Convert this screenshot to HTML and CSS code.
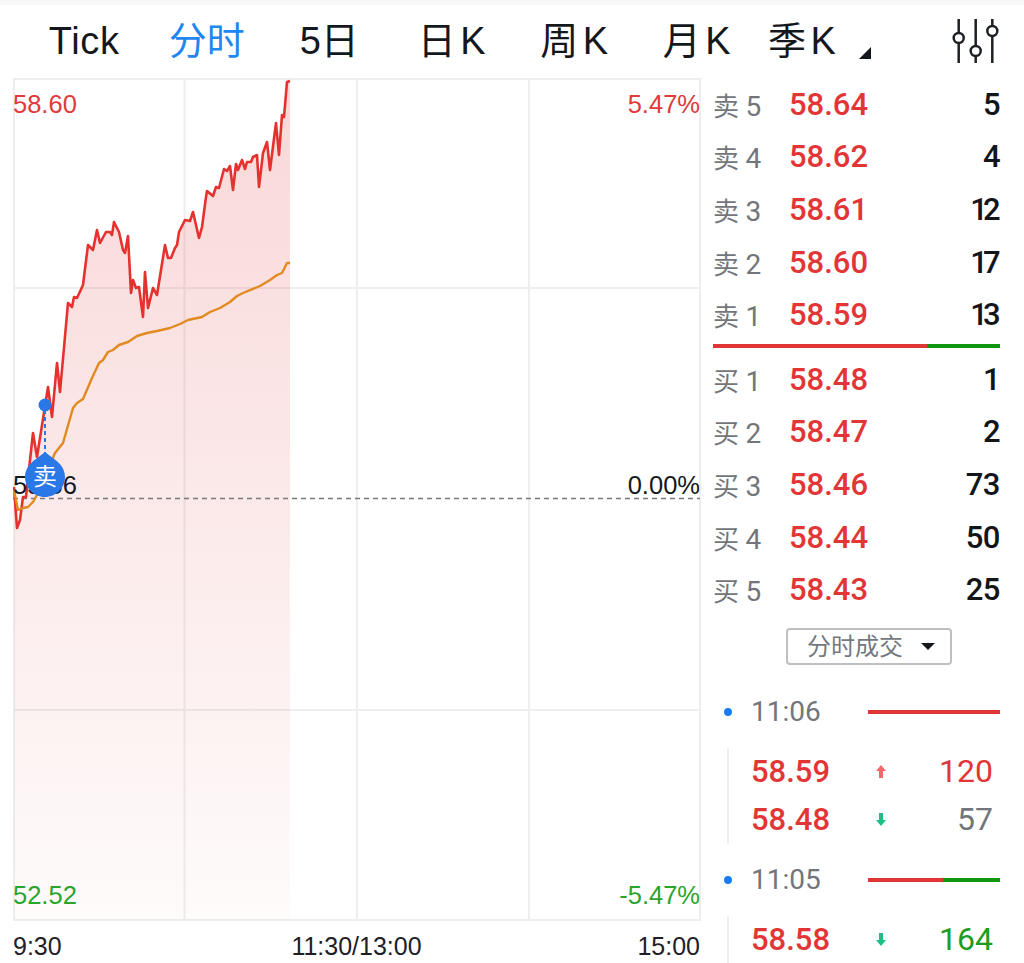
FILE: index.html
```html
<!DOCTYPE html>
<html lang="zh">
<head>
<meta charset="utf-8">
<title>分时</title>
<link rel="stylesheet" href="styles.css">
</head>
<body>
<div class="page">
  <div class="statusband"></div>

  <div class="tabs">
    <span class="tab tick">Tick</span>
    <span class="tab active">分时</span>
    <span class="tab">5日</span>
    <span class="tab">日 K</span>
    <span class="tab">周 K</span>
    <span class="tab">月 K</span>
    <span class="tab last">季 K<i class="corner"></i></span>
    <svg class="sliders" width="48" height="46" viewBox="952 18 48 46">
      <path d="M958.7 19V33M958.7 43V63M975.7 19V46M975.7 56V63M992.3 19V26M992.3 36V63"/>
      <circle cx="958.7" cy="38" r="5"/>
      <circle cx="975.7" cy="51" r="5"/>
      <circle cx="992.3" cy="31" r="5"/>
    </svg>
  </div>

  <div class="main">
    <div class="left">
      <div class="chart">
        <svg class="plot" width="688" height="843" viewBox="13 78 688 843">
          <defs>
            <linearGradient id="areafill" gradientUnits="userSpaceOnUse" x1="0" y1="81" x2="0" y2="920">
              <stop offset="0" stop-color="#e0393a" stop-opacity=".2"/>
              <stop offset="1" stop-color="#e0393a" stop-opacity=".02"/>
            </linearGradient>
          </defs>
          <g class="grid">
            <path d="M14 79H700V920H14Z"/>
            <path d="M14 288H700M14 710H700M184.500 79V920M357 79V920M529 79V920"/>
          </g>
          <path class="area" d="M14 487L17 528 20 520 23 497 26 497 33 433 37 457 48 387 52 417 57 363 60 392 68 303 72 307 74 297 77 298 83 285 88 245 93 250 97 230 100 243 106 232 110 232 112 235 114 222 119 232 123 250 125 253 128 236 131 293 133 280 136 288 139 287 143 317 145 272 148 308 153 288 157 295 165 245 168 258 171 258 175 248 177 245 179 232 185 220 190 221 193 212 199 238 202 227 206 197 207 191 213 196 216 187 219 188 224 169 227 171 230 166 233 190 236 164 238 170 242 160 245 169 247 162 251 162 253 157 257 155 259 187 263 153 267 142 270 170 276 123 279 155 282 115 284 117 287 82 290 81V920H14Z"/>
          <path class="dashed" d="M13 498.500H700"/>
          <polyline class="price" points="14,487 17,528 20,520 23,497 26,497 33,433 37,457 48,387 52,417 57,363 60,392 68,303 72,307 74,297 77,298 83,285 88,245 93,250 97,230 100,243 106,232 110,232 112,235 114,222 119,232 123,250 125,253 128,236 131,293 133,280 136,288 139,287 143,317 145,272 148,308 153,288 157,295 165,245 168,258 171,258 175,248 177,245 179,232 185,220 190,221 193,212 199,238 202,227 206,197 207,191 213,196 216,187 219,188 224,169 227,171 230,166 233,190 236,164 238,170 242,160 245,169 247,162 251,162 253,157 257,155 259,187 263,153 267,142 270,170 276,123 279,155 282,115 284,117 287,82 290,81"/>
          <polyline class="avg" points="14,490 18,510 23,508 28,507 33,502 38,493 55,453 63,443 73,408 77,403 83,399 92,378 99,363 103,360 108,352 113,350 119,345 128,342 137,336 147,333 157,331 170,328 180,324 188,320 202,317 210,312 220,308 230,302 237,296 243,293 260,286 270,280 277,275 282,273 285,267 287,263 290,263"/>
        </svg>

        <span class="lbl up tl">58.60</span>
        <span class="lbl up tr">5.47%</span>
        <span class="lbl ml">55.56</span>
        <span class="lbl mr">0.00%</span>
        <span class="lbl down bl">52.52</span>
        <span class="lbl down br">-5.47%</span>

        <div class="marker">
          <svg width="44" height="100" viewBox="23 398 44 100">
            <circle class="mdot" cx="45" cy="405" r="6.500"/>
            <path class="mline" d="M45 410V455"/>
            <path class="mdrop" d="M45 452L54 459C60 463 65 469 65 477 65 488 56 497 45 497 34 497 25 488 25 477 25 469 30 463 36 459Z"/>
          </svg>
          <span class="mtext">卖</span>
        </div>
      </div>
      <div class="axis">
        <span>9:30</span>
        <span>11:30/13:00</span>
        <span class="end">15:00</span>
      </div>
    </div>

    <div class="right">
      <div class="book">
        <div class="row"><span class="side">卖 <b>5</b></span><span class="px">58.64</span><span class="qty">5</span></div>
        <div class="row"><span class="side">卖 <b>4</b></span><span class="px">58.62</span><span class="qty">4</span></div>
        <div class="row"><span class="side">卖 <b>3</b></span><span class="px">58.61</span><span class="qty"><i class="n1">1</i>2</span></div>
        <div class="row"><span class="side">卖 <b>2</b></span><span class="px">58.60</span><span class="qty"><i class="n1">1</i>7</span></div>
        <div class="row"><span class="side">卖 <b>1</b></span><span class="px">58.59</span><span class="qty"><i class="n1">1</i>3</span></div>
      </div>
      <div class="ratio"><i class="r" style="width:74.600%"></i><i class="g"></i></div>
      <div class="book">
        <div class="row"><span class="side">买 <b>1</b></span><span class="px">58.48</span><span class="qty">1</span></div>
        <div class="row"><span class="side">买 <b>2</b></span><span class="px">58.47</span><span class="qty">2</span></div>
        <div class="row"><span class="side">买 <b>3</b></span><span class="px">58.46</span><span class="qty">73</span></div>
        <div class="row"><span class="side">买 <b>4</b></span><span class="px">58.44</span><span class="qty">50</span></div>
        <div class="row"><span class="side">买 <b>5</b></span><span class="px">58.43</span><span class="qty">25</span></div>
      </div>

      <div class="selectc">
        <div class="select">分时成交<i class="caret"></i></div>
      </div>

      <div class="minute">
        <i class="dot"></i><span class="time">11:06</span>
        <div class="ratio small"><i class="r" style="width:100%"></i></div>
      </div>
      <div class="trades">
        <div class="trade">
          <span class="px">58.59</span>
          <svg class="arrow up" width="10" height="13" viewBox="0 0 10 13"><path d="M5 0L10 6H7V13H3V6H0Z"/></svg>
          <span class="vol up">120</span>
        </div>
        <div class="trade">
          <span class="px">58.48</span>
          <svg class="arrow down" width="10" height="13" viewBox="0 0 10 13"><path d="M5 13L10 7H7V0H3V7H0Z"/></svg>
          <span class="vol">57</span>
        </div>
      </div>

      <div class="minute">
        <i class="dot"></i><span class="time">11:05</span>
        <div class="ratio small"><i class="r" style="width:57%"></i><i class="g"></i></div>
      </div>
      <div class="trades">
        <div class="trade">
          <span class="px">58.58</span>
          <svg class="arrow down" width="10" height="13" viewBox="0 0 10 13"><path d="M5 13L10 7H7V0H3V7H0Z"/></svg>
          <span class="vol down">164</span>
        </div>
      </div>
    </div>
  </div>
</div>
</body>
</html>
```

FILE: styles.css
```css
body {
  margin: 0;
  background: #fff;
  font-family: "Liberation Sans", "Noto Sans CJK SC", sans-serif;
  color: #14181d;
}
.page {
  width: 1024px;
  height: 963px;
  overflow: hidden;
}
.statusband {
  height: 5px;
  background: #f8f8f8;
}

/* tabs */
.tabs {
  height: 73px;
  display: flex;
  align-items: center;
  padding-left: 23px;
  position: relative;
}
.tab {
  width: 122.500px;
  text-align: center;
  font-size: 38px;
  line-height: 73px;
  word-spacing: -6px;
  white-space: nowrap;
}
.tab.tick {
  letter-spacing: .7px;
}
.tab.active {
  color: #1f87ef;
}
.tab.last {
  width: 110px;
  text-align: left;
  padding-left: 10px;
  box-sizing: border-box;
  flex: none;
}
.corner {
  display: inline-block;
  width: 0;
  height: 0;
  margin-left: 23px;
  border-left: 12px solid transparent;
  border-bottom: 12px solid #14181d;
  vertical-align: -5px;
}
.sliders {
  position: absolute;
  left: 952px;
  top: 13px;
}
.sliders path,
.sliders circle {
  fill: #fff;
  stroke: #1d2126;
  stroke-width: 2.500;
}

/* chart */
.main {
  display: flex;
}
.left {
  width: 688px;
  margin-left: 13px;
  flex: none;
}
.chart {
  position: relative;
  height: 843px;
}
.plot {
  display: block;
}
.grid path {
  fill: none;
  stroke: #eeeeee;
  stroke-width: 2;
}
.area {
  fill: url(#areafill);
}
.dashed {
  fill: none;
  stroke: #77777c;
  stroke-width: 1.500;
  stroke-dasharray: 5 4;
}
.price {
  fill: none;
  stroke: #e5322f;
  stroke-width: 2.600;
  stroke-linejoin: round;
}
.avg {
  fill: none;
  stroke: #e08a20;
  stroke-width: 2.400;
  stroke-linejoin: round;
}
.lbl {
  position: absolute;
  font-size: 25.500px;
  line-height: 28px;
}
.lbl.up {
  color: #e03a3a;
}
.lbl.down {
  color: #2aa52c;
}
.tl { left: 0; top: 12px; }
.tr { right: 1px; top: 12px; }
.ml { left: 0; top: 393px; }
.mr { right: 1px; top: 393px; }
.bl { left: 0; top: 803px; }
.br { right: 1px; top: 803px; }

.marker {
  position: absolute;
  left: 10px;
  top: 320px;
  width: 44px;
  height: 100px;
}
.marker svg {
  display: block;
}
.mdot, .mdrop {
  fill: #2a78e8;
}
.mline {
  fill: none;
  stroke: #2a78e8;
  stroke-width: 2;
  stroke-dasharray: 4 3;
}
.mtext {
  position: absolute;
  left: 10px;
  top: 64px;
  font-size: 24px;
  line-height: 30px;
  color: #fff;
}
.axis {
  display: grid;
  grid-template-columns: 1fr auto 1fr;
  font-size: 25px;
  line-height: 50px;
  color: #1d2126;
  padding-right: 1px;
}
.axis .end {
  text-align: right;
}

/* order book */
.right {
  flex: none;
  width: 287px;
  margin-left: 12px;
}
.px, .qty, .vol, .side, .time {
  font-family: Roboto, "Noto Sans CJK SC", sans-serif;
}
.row {
  height: 52.600px;
  display: flex;
  align-items: center;
}
.side {
  width: 76px;
  flex: none;
  font-size: 26px;
  color: #72767b;
}
.side b {
  font-size: 28px;
  font-weight: 400;
}
.px {
  font-size: 31px;
  font-weight: 500;
  color: #e23636;
}
.qty {
  margin-left: auto;
  font-size: 31px;
  font-weight: 500;
  color: #12161b;
  letter-spacing: -.5px;
}
.n1 {
  font-style: normal;
  letter-spacing: -5px;
}
.ratio {
  display: flex;
  height: 4px;
  margin: 3px 0 5px;
  background: #0f970f;
}
.ratio .r {
  background: #e23636;
  display: block;
}
.ratio .g {
  flex: 1;
  display: block;
  background: #0f970f;
}

/* dropdown */
.selectc {
  padding-left: 73px;
  margin-top: 12px;
}
.select {
  width: 166px;
  height: 37px;
  box-sizing: border-box;
  border: 2px solid #bdbfc2;
  border-radius: 4px;
  font-size: 24px;
  line-height: 33px;
  color: #74787d;
  padding-left: 19px;
  display: flex;
  align-items: center;
}
.caret {
  margin-left: 18px;
  border-left: 7px solid transparent;
  border-right: 7px solid transparent;
  border-top: 7px solid #14181d;
}

/* trades */
.minute {
  height: 40px;
  display: flex;
  align-items: center;
  margin-top: 16px;
}
.selectc + .minute {
  margin-top: 27px;
}
.dot {
  width: 8px;
  height: 8px;
  border-radius: 50%;
  background: #1a7cf0;
  margin-left: 11px;
}
.time {
  font-size: 28px;
  color: #72767b;
  margin-left: 19px;
}
.ratio.small {
  width: 132px;
  height: 4.500px;
  margin: 0 0 0 auto;
}
.trades {
  margin: 16px 0 0 14px;
  border-left: 2px solid #eeeeee;
  padding-left: 22px;
  padding-right: 7px;
}
.trade {
  height: 48px;
  display: flex;
  align-items: center;
}
.arrow {
  margin-left: 46px;
  flex: none;
}
.arrow.up path {
  fill: #f06a6a;
}
.arrow.down path {
  fill: #20bd85;
}
.vol {
  margin-left: auto;
  margin-top: -2px;
  font-size: 32px;
  color: #72767b;
}
.vol.up {
  color: #e23636;
}
.vol.down {
  color: #1c9c22;
}
```
